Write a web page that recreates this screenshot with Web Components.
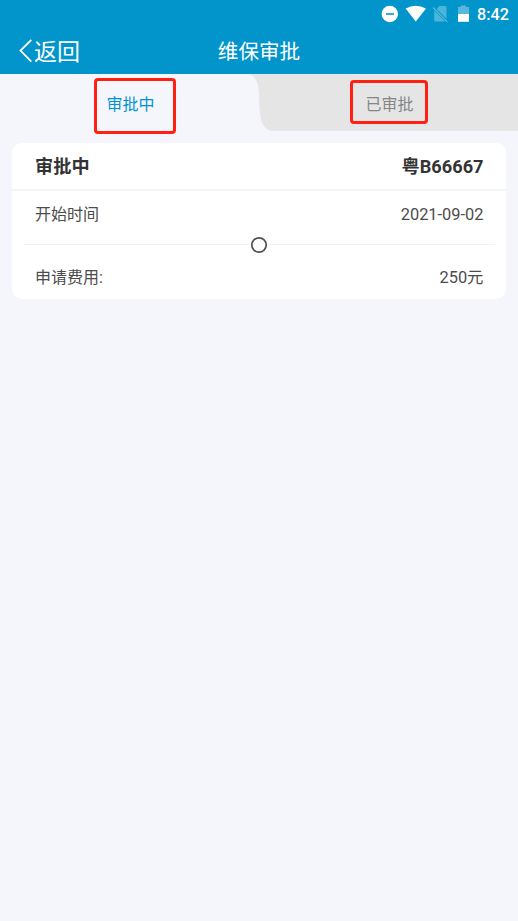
<!DOCTYPE html>
<html lang="zh-CN">
<head>
<meta charset="utf-8">
<title>维保审批</title>
<style>
html,body{margin:0;height:100%}
body{background:#f4f6fb;font-family:Roboto,"Noto Sans CJK SC",sans-serif;overflow:hidden}
</style>
</head>
<body>
<approval-page></approval-page>
<script>
const define = (name, html) => {
  const t = document.createElement('template');
  t.innerHTML = html;
  customElements.define(name, class extends HTMLElement {
    constructor() {
      super();
      this.attachShadow({mode: 'open'}).append(t.content.cloneNode(true));
    }
  });
};

define('status-bar', `
<style>
:host{display:flex;height:28px;box-sizing:border-box;padding-right:9px;justify-content:flex-end;align-items:center;background:#0295cb;color:#fff}
svg{display:block;width:100px;height:28px}
span{font-size:16.2px;font-weight:500;line-height:30px;height:28px;width:32px;margin-left:7px;white-space:nowrap}
</style>
<svg viewBox="370 0 100 28">
  <circle cx="389.8" cy="14" r="8.2" fill="#fff"/>
  <path d="M386 14h8" stroke="#0295cb" stroke-width="1.6"/>
  <path d="M405.6 8.500Q415.800 3.200 426 8.500L415.800 21.400Z" fill="#fff"/>
  <path d="M439.500 6H445Q446.500 6 446.500 7.500V18.800L436.600 8.900ZM434.200 10.500L445.200 21.500H435.500Q434.200 21.500 434.200 20Z" fill="#fff" opacity=".3"/>
  <path d="M433 7.500L447.300 21.800" stroke="#fff" stroke-opacity=".35" stroke-width="1.2"/>
  <path d="M460.800 5.500h5.200v1.600h3v6.900h-11V7.100h2.800Z" fill="#fff" opacity=".33"/>
  <path d="M458 14h11v7.8h-11Z" fill="#fff"/>
</svg>
<span>8:42</span>`);

define('nav-bar', `
<style>
:host{display:grid;grid-template-columns:1fr auto 1fr;height:46px;background:#0295cb;color:#fff;line-height:48px}
.back{display:flex;align-items:flex-start;height:46px;padding-left:18px;font-size:23px;line-height:49px}
svg{width:16px;height:26px;display:block;margin-top:10px}
.title{font-size:20.6px}
</style>
<div class="back"><svg viewBox="0 0 16 26"><path d="M13.300 1.800L2.500 12.600L13.300 23.600" fill="none" stroke="#fff" stroke-width="1.8"/></svg><slot name="back"></slot></div>
<div class="title"><slot></slot></div>`);

define('tab-bar', `
<style>
:host{display:grid;grid-template:57px / 1fr 1fr;font-size:16px;isolation:isolate;position:relative}
svg{position:absolute;right:0;top:0;width:270px;height:57px;z-index:-1}
</style>
<svg viewBox="0 0 270 57"><path d="M0 0C7 1 10.500 7 11 20C11.300 43 13 56 25 57H270V0Z" fill="#e5e5e5"/></svg>
<slot></slot>`);

define('tab-item', `
<style>
:host{display:flex;justify-content:center;align-items:flex-start;color:#858585}
:host([active]){color:#0295cb}
div{box-sizing:border-box;width:78px;height:44px;margin-top:6px;border:3px solid #ff2012;border-radius:4px;text-align:center;line-height:44px;padding-left:2px}
:host([active]) div{width:82px;height:56px;margin:4px 0 0 11px;line-height:48px;padding:0 9px 0 0}
</style>
<div><slot></slot></div>`);

define('approval-card', `
<style>
:host{display:block;margin:12px 12px 0 11.500px;height:156px;background:#fff;border-radius:10px;overflow:hidden}
header{height:48px;box-sizing:border-box;border-bottom:2px solid #f3f4f8}
.cut{height:1px;margin:0 11px 0 12px;background:#f2f2f4;display:flex;justify-content:center;align-items:center}
.cut svg{width:18px;height:18px;flex:none}
</style>
<header><slot name="head"></slot></header>
<slot name="date"></slot>
<div class="cut"><svg viewBox="0 0 18 18"><circle cx="9" cy="9" r="7.200" fill="#fff" stroke="#505050" stroke-width="1.700"/></svg></div>
<slot name="fee"></slot>`);

define('info-row', `
<style>
:host{display:flex;justify-content:space-between;padding:0 22.500px 0 23.500px;color:#4c4c4c;font-size:16px;height:53px;line-height:48px}
:host([slot=head]){font-weight:700;font-size:18.200px;color:#333;height:46px;line-height:48px}
:host([slot=fee]){height:54px;line-height:66px}
:host(:not([slot=head])) .value{font-size:16.400px}
</style>
<slot name="label"></slot><div class="value"><slot></slot></div>`);

define('approval-page', `
<style>:host{display:block}</style>
<status-bar></status-bar>
<nav-bar><span slot="back">返回</span>维保审批</nav-bar>
<tab-bar><tab-item active>审批中</tab-item><tab-item>已审批</tab-item></tab-bar>
<approval-card>
  <info-row slot="head"><span slot="label">审批中</span><span>粤B66667</span></info-row>
  <info-row slot="date"><span slot="label">开始时间</span><span>2021-09-02</span></info-row>
  <info-row slot="fee"><span slot="label">申请费用:</span><span>250元</span></info-row>
</approval-card>`);
</script>
</body>
</html>
